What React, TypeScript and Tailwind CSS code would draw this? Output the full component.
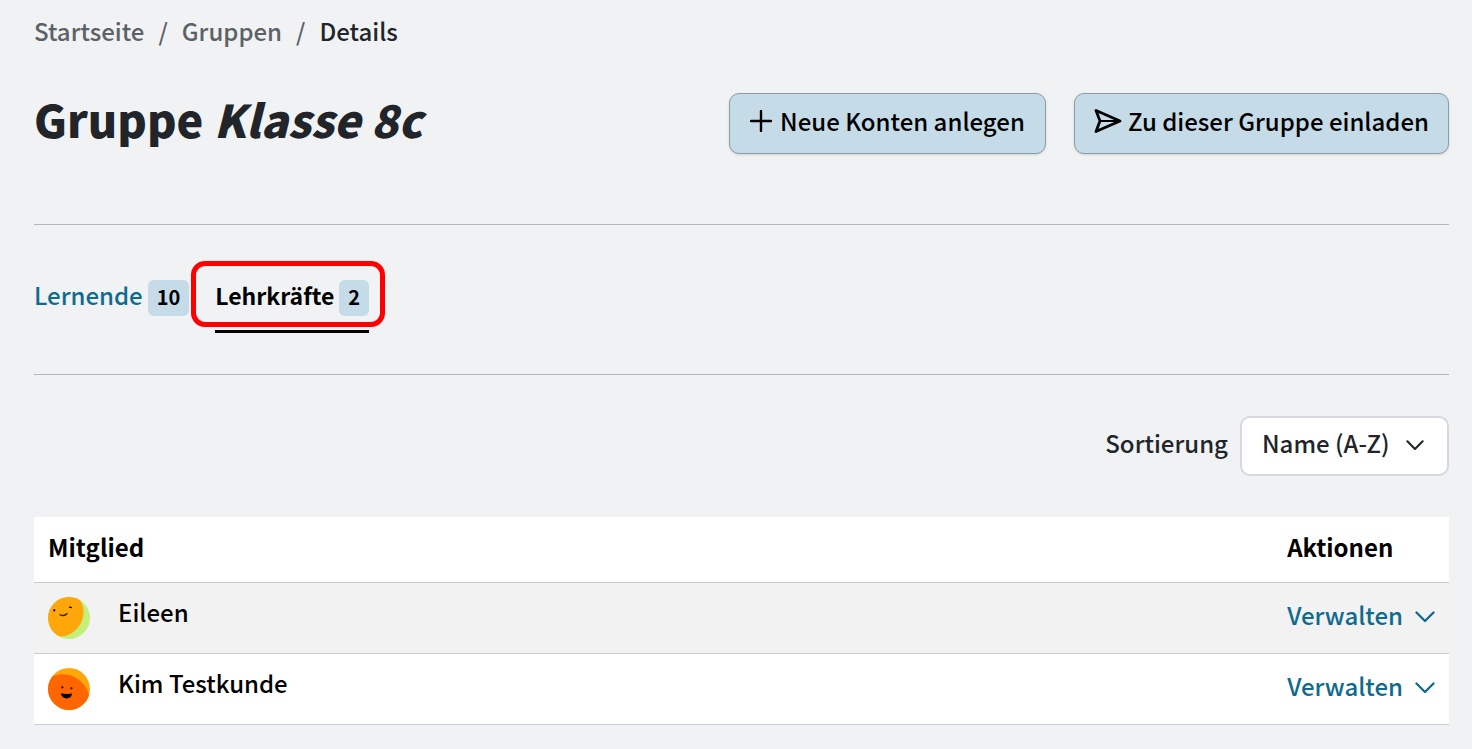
import { useState } from "react";

const tabs = [
    { id: "lernende", label: "Lernende", count: 10 },
    { id: "lehrkraefte", label: "Lehrkräfte", count: 2 },
];

const members = [
    { name: "Eileen", avatar: <AvatarEileen /> },
    { name: "Kim Testkunde", avatar: <AvatarKim /> },
];

function AvatarEileen() {
    return (
        <svg viewBox="0 0 42 42" className="block size-[42px]" aria-hidden="true">
            <defs>
                <clipPath id="clip-eileen">
                    <circle cx="21" cy="21" r="21" />
                </clipPath>
            </defs>
            <g clipPath="url(#clip-eileen)">
                <rect width="42" height="42" fill="#c3f07a" />
                <ellipse cx="14" cy="17" rx="21" ry="23" fill="#ffa60a" transform="rotate(30 14 17)" />
                <ellipse cx="6.3" cy="13.2" rx="0.9" ry="1.3" />
                <path d="M21 10.3q1.4-.6 2.8.5" fill="none" stroke="#000" strokeWidth="1.3" />
                <path d="M11.5 17.5q4.5 2.6 8-1.2" fill="none" stroke="#3a2500" strokeWidth="1.4" />
            </g>
        </svg>
    );
}

function AvatarKim() {
    return (
        <svg viewBox="0 0 42 42" className="block size-[42px]" aria-hidden="true">
            <defs>
                <clipPath id="clip-kim">
                    <circle cx="21" cy="21" r="21" />
                </clipPath>
            </defs>
            <g clipPath="url(#clip-kim)">
                <rect width="42" height="42" fill="#ffa60a" />
                <ellipse cx="17" cy="29" rx="25" ry="22" fill="#ff6600" transform="rotate(28 17 29)" />
                <circle cx="14.3" cy="19.3" r="1.2" fill="#5a2400" />
                <circle cx="23.3" cy="20.3" r="1.2" fill="#5a2400" />
                <path d="M12.7 25.3q5.5 1.2 11.3.3q-.6 4.900-5.5 4.900q-4.800-.3-5.8-5.2z" />
            </g>
        </svg>
    );
}

function ChevronIcon({ className }: { className?: string }) {
    return (
        <svg
            viewBox="0 0 20 12"
            className={className}
            fill="none"
            stroke="currentColor"
            strokeWidth="2.3"
            strokeLinecap="round"
            strokeLinejoin="round"
            aria-hidden="true"
        >
            <path d="M1.5 1.5L10 10L18.5 1.5" />
        </svg>
    );
}

function PlusIcon() {
    return (
        <svg viewBox="0 0 22 22" className="size-[22px]" fill="none" stroke="currentColor" strokeWidth="2.4" strokeLinecap="round" aria-hidden="true">
            <path d="M11 1v20M1 11h20" />
        </svg>
    );
}

function SendIcon() {
    return (
        <svg viewBox="0 0 28 24" className="h-6 w-7" fill="none" stroke="currentColor" strokeWidth="2.8" strokeLinejoin="round" aria-hidden="true">
            <path d="M2 1.5L26 12L2 22.5L6 12z" />
            <path d="M6 12h20" strokeWidth="2" />
        </svg>
    );
}

export default function App() {
    const [activeTab, setActiveTab] = useState("lehrkraefte");
    const [sort, setSort] = useState("asc");

    return (
        <div className="min-h-screen bg-[#f0f2f4] pt-[15px] pr-[23px] pb-6 pl-[34px] font-['Noto_Sans_CJK_SC',sans-serif] text-2xl leading-8 font-medium text-[#212529]">
            <nav aria-label="Breadcrumb">
                <ol className="flex gap-3.5 text-[#5c6166]">
                    <li><a href="#start">Startseite</a></li>
                    <li aria-hidden="true">/</li>
                    <li><a href="#gruppen">Gruppen</a></li>
                    <li aria-hidden="true">/</li>
                    <li aria-current="page" className="text-[#212529]">Details</li>
                </ol>
            </nav>

            <header className="mt-[46px] flex items-start justify-between">
                <h1 className="text-[45px] leading-[52px] font-black">
                    Gruppe <em>Klasse 8c</em>
                </h1>
                <div className="flex gap-7">
                    <button type="button" className="flex h-[61px] items-center gap-2 rounded-[10px] border border-[#8a9ca9] bg-[#c5dbe8] px-5 pb-1.5 text-black shadow-sm">
                        <PlusIcon />
                        Neue Konten anlegen
                    </button>
                    <button type="button" className="flex h-[61px] items-center gap-1.5 rounded-[10px] border border-[#8a9ca9] bg-[#c5dbe8] px-[19px] pb-1.5 text-black shadow-sm">
                        <SendIcon />
                        Zu dieser Gruppe einladen
                    </button>
                </div>
            </header>

            <nav aria-label="Mitglieder" className="mt-[70px] flex h-[151px] gap-[26px] border-y border-[#b4b7bb] pt-[55px]">
                {tabs.map((tab) => {
                    const active = tab.id === activeTab;
                    return (
                        <button
                            key={tab.id}
                            type="button"
                            onClick={() => setActiveTab(tab.id)}
                            className={
                                active
                                    ? "relative flex h-[53px] gap-[5px] border-b-3 border-black text-[23px] leading-[30px] font-bold text-black"
                                    : "flex h-[53px] gap-[5px] leading-[30px] text-[#0f6a8f]"
                            }
                        >
                            {tab.label}
                            <span className="h-9 rounded-md bg-[#c5dbe8] px-[9px] text-xl leading-[34px] font-bold text-black">
                                {tab.count}
                            </span>
                            {active && (
                                <span className="absolute -top-[19px] -right-4 -left-6 h-[66px] rounded-[14px] border-5 border-[#ff0000]" />
                            )}
                        </button>
                    );
                })}
            </nav>

            <div className="mt-[41px] flex items-center justify-end gap-3">
                <label htmlFor="sort" className="pb-1.5">Sortierung</label>
                <div className="relative">
                    <select
                        id="sort"
                        value={sort}
                        onChange={(e) => setSort(e.target.value)}
                        className="h-[60px] w-[209px] appearance-none rounded-[10px] border-2 border-[#d5d9df] bg-white pb-1.5 pl-5"
                    >
                        <option value="asc">Name (A-Z)</option>
                        <option value="desc">Name (Z-A)</option>
                    </select>
                    <ChevronIcon className="pointer-events-none absolute top-6 right-[25px] w-[18px]" />
                </div>
            </div>

            <table className="mt-[41px] w-full text-left text-black">
                <thead>
                    <tr className="h-[65px] border-b border-[#c8cdd4] bg-white">
                        <th scope="col" className="px-3.5 pb-1 font-bold">Mitglied</th>
                        <th scope="col" className="w-[175px] px-3.5 pb-1 font-bold">Aktionen</th>
                    </tr>
                </thead>
                <tbody>
                    {members.map((m) => (
                        <tr key={m.name} className="h-[71px] border-b border-[#c8cdd4] bg-white odd:bg-[#f2f2f2]">
                            <td className="px-3.5">
                                <div className="flex items-center gap-7">
                                    {m.avatar}
                                    <span className="pb-3">{m.name}</span>
                                </div>
                            </td>
                            <td className="px-3.5 pb-1.5">
                                <button type="button" className="flex items-center gap-3 text-[#0f6a8f]">
                                    Verwalten
                                    <ChevronIcon className="mt-1 w-5" />
                                </button>
                            </td>
                        </tr>
                    ))}
                </tbody>
            </table>
        </div>
    );
}
